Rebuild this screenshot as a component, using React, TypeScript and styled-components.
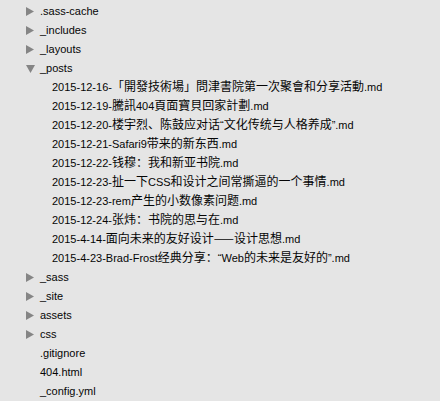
import React from "react";
import styled, { createGlobalStyle } from "styled-components";

const GlobalStyle = createGlobalStyle`
  html, body {
    margin: 0;
    padding: 0;
    background: #e5e5e5;
  }
`;

type Node = {
  name: string;
  open?: boolean;
  folder?: boolean;
  children?: Node[];
};

const tree: Node[] = [
  { name: ".sass-cache", folder: true },
  { name: "_includes", folder: true },
  { name: "_layouts", folder: true },
  {
    name: "_posts",
    folder: true,
    open: true,
    children: [
      { name: "2015-12-16-「開發技術場」問津書院第一次聚會和分享活動.md" },
      { name: "2015-12-19-騰訊404頁面寶貝回家計劃.md" },
      { name: "2015-12-20-楼宇烈、陈鼓应对话“文化传统与人格养成”.md" },
      { name: "2015-12-21-Safari9带来的新东西.md" },
      { name: "2015-12-22-钱穆：我和新亚书院.md" },
      { name: "2015-12-23-扯一下CSS和设计之间常撕逼的一个事情.md" },
      { name: "2015-12-23-rem产生的小数像素问题.md" },
      { name: "2015-12-24-张炜：书院的思与在.md" },
      { name: "2015-4-14-面向未来的友好设计——设计思想.md" },
      { name: "2015-4-23-Brad-Frost经典分享：“Web的未来是友好的”.md" },
    ],
  },
  { name: "_sass", folder: true },
  { name: "_site", folder: true },
  { name: "assets", folder: true },
  { name: "css", folder: true },
  { name: ".gitignore" },
  { name: "404.html" },
  { name: "_config.yml" },
];

const Sidebar = styled.div`
  background: #e5e5e5;
  width: 440px;
  height: 401px;
  padding-top: 2px;
  box-sizing: border-box;
  overflow: hidden;
  font-family: "Liberation Sans", "Noto Sans CJK SC", sans-serif;
  font-size: 11px;
  color: #050505;
`;

const Row = styled.div<{ $depth: number }>`
  display: flex;
  align-items: center;
  height: 19px;
  line-height: 19px;
  padding-left: ${({ $depth }) => 26 + $depth * 12}px;
  white-space: nowrap;
`;

const Toggle = styled.span`
  display: flex;
  align-items: center;
  width: 14px;
  height: 19px;
  flex-shrink: 0;
`;

const Label = styled.span`
  display: block;
  height: 19px;
  line-height: 19px;
`;

const Han = styled.span`
  font-family: "Noto Sans CJK SC", sans-serif;
  font-size: 12px;
  line-height: 12px;
`;

const Arrow = ({ open }: { open?: boolean }) =>
  open ? (
    <svg width="9" height="8" viewBox="0 0 9 8">
      <polygon points="0,0 9,0 4.5,8" fill="#858585" />
    </svg>
  ) : (
    <svg width="8" height="9" viewBox="0 0 8 9">
      <polygon points="0,0 8,4.5 0,9" fill="#858585" />
    </svg>
  );

// runs of CJK text get the CJK font at 12px, the rest stays Latin at 11px
const cjk = /([\u2014\u3000-\u303f\u3400-\u9fff\uff00-\uffef]+)/;

const Name = ({ text }: { text: string }) => (
  <Label>
    {text.split(cjk).map((part, i) =>
      i % 2 === 1 ? <Han key={i}>{part}</Han> : part
    )}
  </Label>
);

const Item = ({ node, depth }: { node: Node; depth: number }) => (
  <>
    <Row $depth={depth}>
      <Toggle>{node.folder && <Arrow open={node.open} />}</Toggle>
      <Name text={node.name} />
    </Row>
    {node.open &&
      node.children?.map((c) => (
        <Item key={c.name} node={c} depth={depth + 1} />
      ))}
  </>
);

export default function App() {
  return (
    <>
      <GlobalStyle />
      <Sidebar>
        {tree.map((n) => (
          <Item key={n.name} node={n} depth={0} />
        ))}
      </Sidebar>
    </>
  );
}
